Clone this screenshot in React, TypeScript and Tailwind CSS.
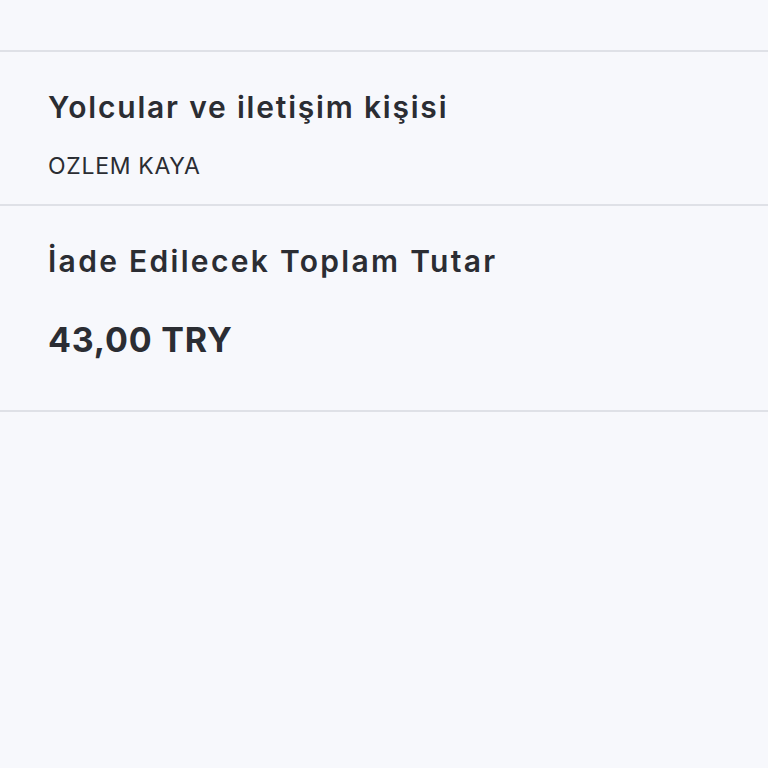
export default function App() {
  return (
    <div className="min-h-[768px] bg-[#f7f8fc] text-[#2b2d33]" style={{ fontFamily: "Inter, 'Noto Sans', sans-serif" }}>
      <div className="h-[52px] border-b-2 border-[#dfe1e7]" />
      <section className="h-[154px] border-b-2 border-[#dfe1e7] px-12 pt-[36px]">
        <h2 className="text-[30px] font-semibold leading-[38px] tracking-[1.8px]">Yolcular ve iletişim kişisi</h2>
        <p className="mt-[26px] text-[23px] leading-[28px] tracking-[0.7px]">OZLEM KAYA</p>
      </section>
      <section className="h-[206px] border-b-2 border-[#dfe1e7] px-12 pt-[36px]">
        <h2 className="text-[30px] font-semibold leading-[38px] tracking-[2.3px]">İade Edilecek Toplam Tutar</h2>
        <p className="mt-[39px] text-[34px] font-bold leading-[42px] tracking-[0.8px]">43,00 TRY</p>
      </section>
    </div>
  );
}
